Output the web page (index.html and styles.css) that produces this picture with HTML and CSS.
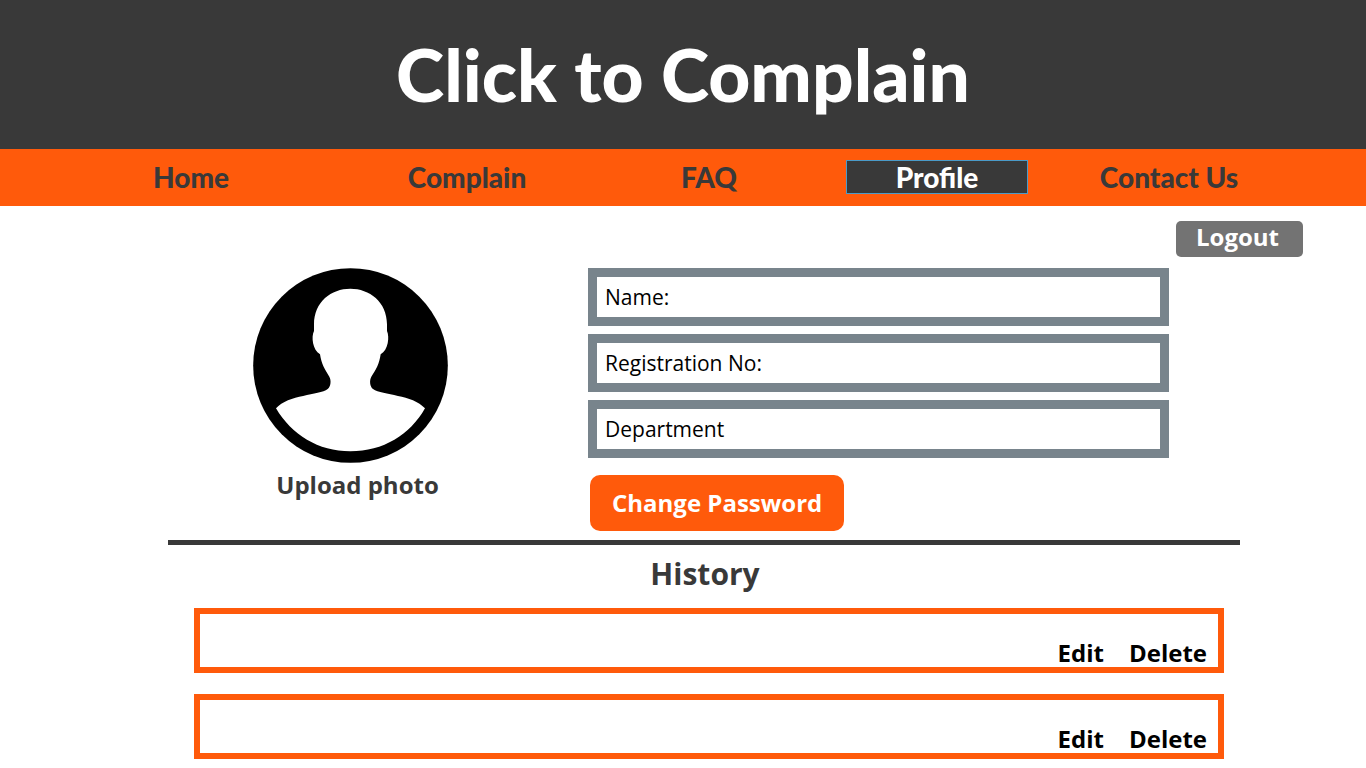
FILE: index.html
```html
<!DOCTYPE html>
<html lang="en">
<head>
<meta charset="utf-8">
<meta name="viewport" content="width=device-width, initial-scale=1">
<title>Click to Complain</title>
<link rel="stylesheet" href="styles.css">
</head>
<body>
<header class="banner"><h1 class="brand">Click to Complain</h1></header>
<nav class="nav">
  <a class="nav-link" href="#home">Home</a>
  <a class="nav-link" href="#complain">Complain</a>
  <a class="nav-link" href="#faq">FAQ</a>
  <a class="nav-link active" href="#profile" aria-current="page">Profile</a>
  <a class="nav-link" href="#contact">Contact Us</a>
</nav>
<main>
  <div class="account-bar"><button class="logout" type="button">Logout</button></div>
  <section class="profile">
    <div class="photo">
      <svg class="avatar" viewBox="39 39 585 585" aria-hidden="true">
        <circle cx="331.500" cy="331.500" r="292" fill="#000"/>
        <path fill="#fff" d="M331 101C388 101 441 140 441 208L441 228C449 245 445 285 422 298C418 326 408 345 394 365C388 375 389 394 399 402C428 422 518 418 555 460C510 540 430 589 331 589C235 589 155 540 108 460C145 418 237 422 263 402C273 394 274 375 268 365C255 345 244 326 240 298C218 285 213 245 222 228L222 208C222 140 274 101 331 101Z"/>
      </svg>
      <button class="upload" type="button">Upload photo</button>
    </div>
    <form class="details">
      <div class="field"><label for="name">Name:</label><input id="name" type="text"></div>
      <div class="field"><label for="reg">Registration No:</label><input id="reg" type="text"></div>
      <div class="field"><label for="dept">Department</label><input id="dept" type="text"></div>
      <button class="password" type="button">Change Password</button>
    </form>
  </section>
  <section class="history">
    <h2 class="history-title">History</h2>
    <div class="entries">
      <article class="entry"><button class="action" type="button">Edit</button><button class="action" type="button">Delete</button></article>
      <article class="entry"><button class="action" type="button">Edit</button><button class="action" type="button">Delete</button></article>
    </div>
  </section>
</main>
</body>
</html>
```
FILE: styles.css
```css
* { box-sizing: border-box; }
body {
  margin: 0;
  background: #fff;
  color: #393939;
  font-family: "Open Sans", "Noto Sans", sans-serif;
}
button {
  border: 0;
  padding: 0;
  background: none;
  color: inherit;
  font: inherit;
  font-weight: 700;
  font-size: 24px;
  line-height: 32px;
  cursor: pointer;
}
.banner {
  padding: 30px 16px 31px;
  background: #393939;
  text-align: center;
}
.brand {
  margin: 0;
  color: #fff;
  font: 900 73px/88px Lato, sans-serif;
}
.nav {
  display: grid;
  grid-template-columns: 282fr 270fr 214fr 242fr 222fr;
  align-items: center;
  justify-items: center;
  padding: 11px 86px 12px 50px;
  background: #ff5a0b;
}
.nav-link {
  color: #393939;
  font: 900 28px/34px Lato, sans-serif;
  text-decoration: none;
}
.nav-link.active {
  width: 75%;
  border: 1px solid #4a9bc9;
  background: #393939;
  color: #fff;
  line-height: 32px;
  text-align: center;
}
.account-bar {
  display: flex;
  justify-content: flex-end;
  padding: 15px 63px 11px;
}
.logout {
  padding: 0 24px 4px 20px;
  border-radius: 5px;
  background: #737373;
  color: #fff;
}
.profile {
  display: grid;
  grid-template-columns: 365px 1fr;
  gap: 55px;
  margin: 0 126px 0 168px;
  padding: 0 71px 9px 0;
  border-bottom: 5px solid #393939;
}
.photo {
  display: flex;
  flex-direction: column;
  align-items: center;
  gap: 6px;
}
.avatar {
  display: block;
  width: 195px;
  height: 195px;
}
.upload { padding-left: 14px; }
.details {
  display: flex;
  flex-direction: column;
  gap: 8px;
}
.field {
  display: flex;
  align-items: center;
  gap: 8px;
  padding: 4px 8px;
  border: 9px solid #78848c;
  color: #000;
  font-size: 21px;
  line-height: 32px;
}
.field input {
  flex: 1;
  min-width: 0;
  padding: 0;
  border: 0;
  outline: 0;
  font: inherit;
}
.password {
  align-self: flex-start;
  margin: 9px 0 0 2px;
  padding: 12px 22px;
  border-radius: 10px;
  background: #ff5a0b;
  color: #fff;
}
.history {
  padding: 9px 142px 9px 194px;
}
.history-title {
  margin: 0;
  padding-right: 8px;
  font-size: 30px;
  line-height: 40px;
  text-align: center;
}
.entries {
  display: flex;
  flex-direction: column;
  gap: 21px;
  margin-top: 14px;
}
.entry {
  display: flex;
  justify-content: flex-end;
  gap: 25px;
  padding: 24px 11px 0;
  border: 6px solid #ff5a0b;
  color: #000;
}
.action { line-height: 29px; }
```
